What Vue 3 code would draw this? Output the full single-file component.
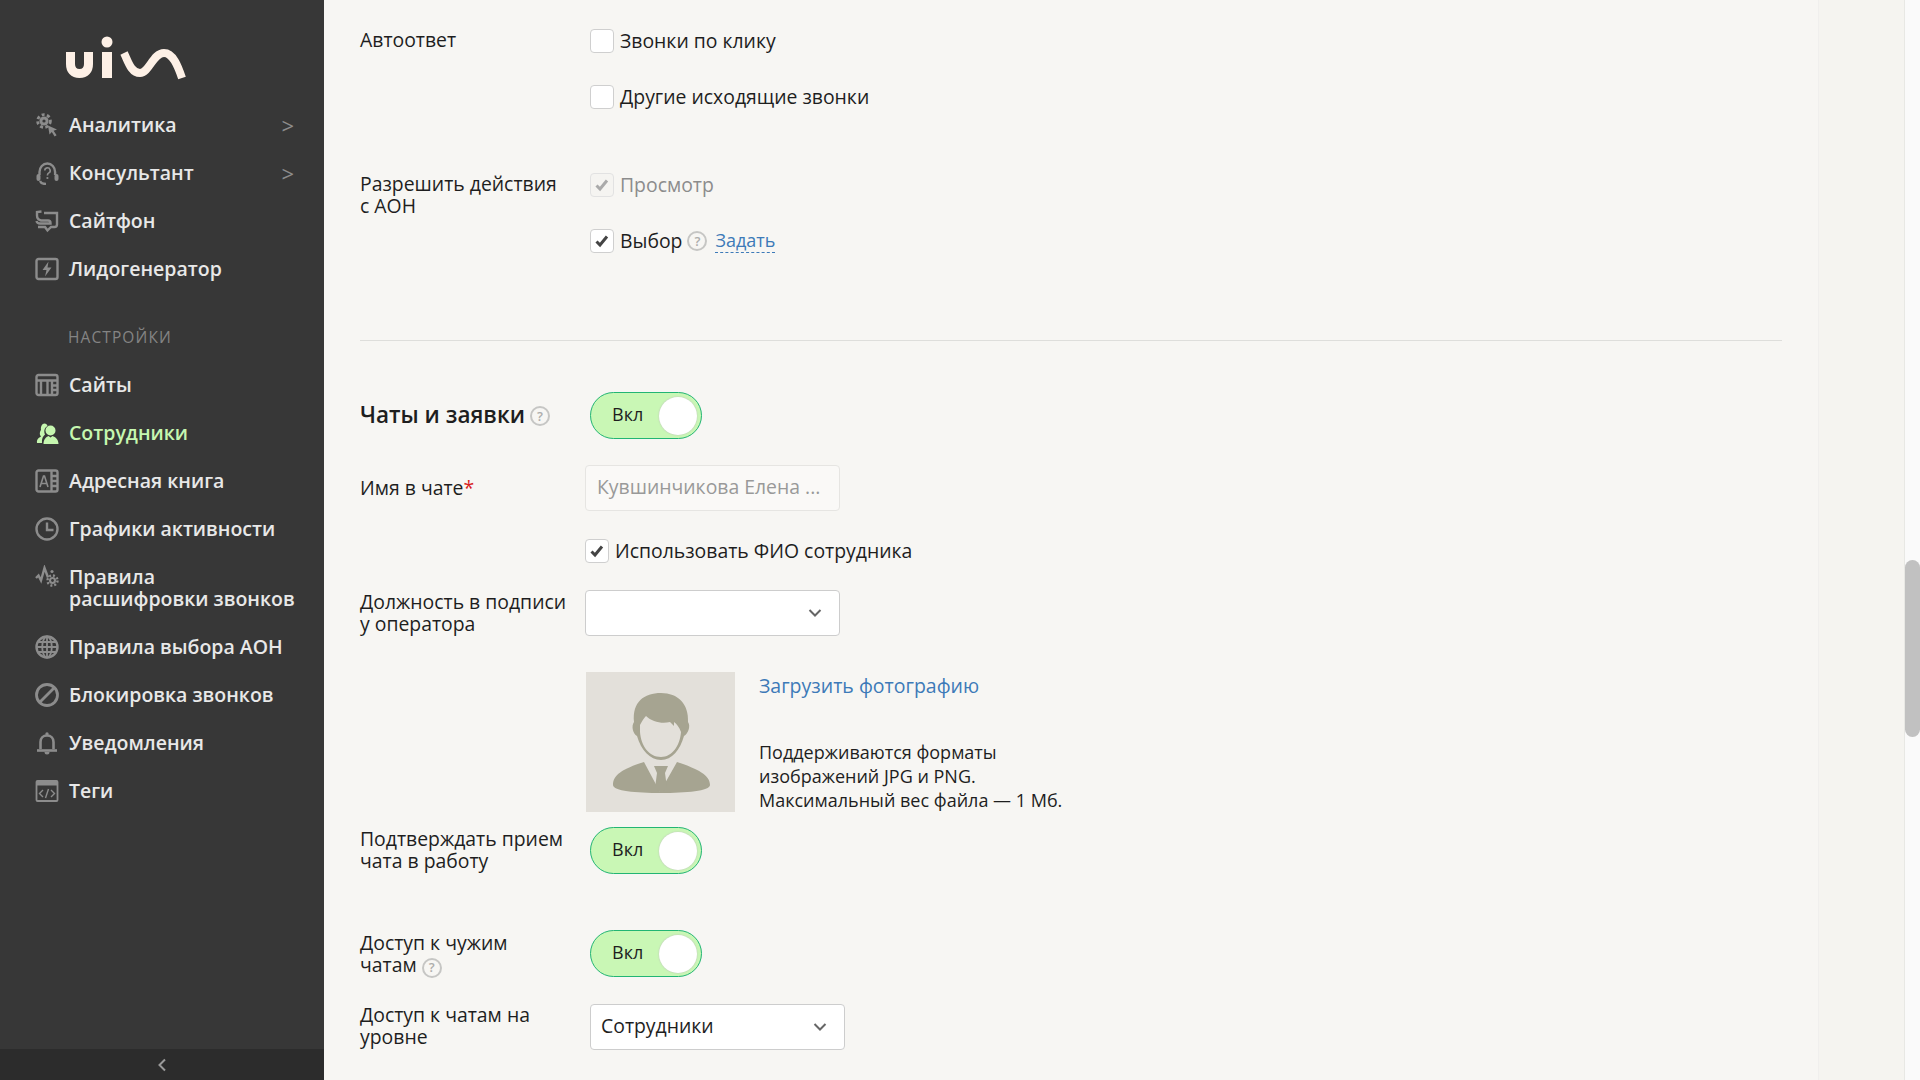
<template>
  <div class="app">
    <aside class="sidebar">
      <svg class="logo" width="120" height="46" viewBox="0 0 120 46">
        <path d="M4.500 16v12c0 6 3 9.500 9 9.500s9-3.500 9-9.500V16" fill="none" stroke="#fdf0e6" stroke-width="9" />
        <path d="M41 16v26" fill="none" stroke="#fdf0e6" stroke-width="10" />
        <circle cx="41" cy="6" r="5.500" fill="#fdf0e6" />
        <path d="M58 17c4 8 7 20 16 20 9 0 13-20 24-20 9 0 14 13 18 25" fill="none" stroke="#fdf0e6" stroke-width="8" />
      </svg>
      <nav class="nav">
        <a v-for="item in mainItems" :key="item.title" class="nav-item">
          <svg class="nav-icon" viewBox="0 0 24 24" v-html="icons[item.icon]"></svg>
          <span>{{ item.title }}</span>
          <span v-if="item.more" class="more">&gt;</span>
        </a>
      </nav>
      <div class="nav-title">НАСТРОЙКИ</div>
      <nav class="nav">
        <a
          v-for="item in settingsItems"
          :key="item.title"
          class="nav-item"
          :class="{ active: item.active }"
        >
          <svg class="nav-icon" viewBox="0 0 24 24" v-html="icons[item.icon]"></svg>
          <span>{{ item.title }}<template v-if="item.second"><br />{{ item.second }}</template></span>
        </a>
      </nav>
      <div class="collapse">
        <svg width="10" height="14" viewBox="0 0 10 14">
          <path d="M8 1.500 2.500 7 8 12.500" fill="none" stroke="#9a9a9a" stroke-width="2" />
        </svg>
      </div>
    </aside>

    <main class="main">
      <div class="content">
        <div class="row first">
          <div class="label top">Автоответ</div>
          <div class="checks">
            <label class="check"><span class="box"></span>Звонки по клику</label>
            <label class="check"><span class="box"></span>Другие исходящие звонки</label>
          </div>
        </div>

        <div class="row aon">
          <div class="label top">Разрешить действия<br />с АОН</div>
          <div class="checks">
            <label class="check disabled">
              <span class="box">
                <svg width="16" height="14" viewBox="0 0 16 14"><path d="M2.500 7.500 6 11l7-8.500" fill="none" stroke="#aaa" stroke-width="3" /></svg>
              </span>
              Просмотр
            </label>
            <label class="check">
              <span class="box">
                <svg width="16" height="14" viewBox="0 0 16 14"><path d="M2.500 7.500 6 11l7-8.500" fill="none" stroke="#444" stroke-width="3" /></svg>
              </span>
              Выбор
              <span class="help">?</span>
              <a class="set-link">Задать</a>
            </label>
          </div>
        </div>

        <div class="divider"></div>

        <div class="row heading-row">
          <h2 class="heading">Чаты и заявки<span class="help">?</span></h2>
          <div class="toggle"><span>Вкл</span><i class="knob"></i></div>
        </div>

        <div class="row name-row narrow">
          <div class="label">Имя в чате<span class="req">*</span></div>
          <input class="name-input" placeholder="Кувшинчикова Елена ..." />
        </div>

        <div class="row fio-row narrow">
          <div class="label"></div>
          <label class="check fio">
            <span class="box">
              <svg width="16" height="14" viewBox="0 0 16 14"><path d="M2.500 7.500 6 11l7-8.500" fill="none" stroke="#444" stroke-width="3" /></svg>
            </span>
            Использовать ФИО сотрудника
          </label>
        </div>

        <div class="row post-row narrow">
          <div class="label">Должность в подписи<br />у оператора</div>
          <div class="select">
            <span></span>
            <svg width="14" height="10" viewBox="0 0 14 10"><path d="M1.500 2 7 7.500 12.500 2" fill="none" stroke="#666" stroke-width="2" /></svg>
          </div>
        </div>

        <div class="row photo-row narrow">
          <div class="label"></div>
          <div class="photo">
            <svg width="149" height="140" viewBox="0 0 149 140">
              <path d="M27 113c0-10 9-16 31-23l16 30 17-30c21 7 33 13 33 23 0 6-24 8-49 8s-48-2-48-8z" fill="#a6a491" />
              <path d="M68 94h14l-3 7 2 15-6 5-6-5 2-15z" fill="#a6a491" />
              <path d="M48 50c-2-20 10-29 27-29s28 11 27 29c3 4 0 12-4 14-4 14-12 24-23 24s-20-10-24-24c-4-2-6-10-3-14z" fill="#a6a491" />
              <path d="M54 53c2-4 4-7 6-9 6 6 16 8 24 6l4 4v-4c3 2 5 5 7 10-1 14-9 25-20 25-12 0-20-11-21-25z" fill="#e3e0da" />
            </svg>
          </div>
          <div class="photo-info">
            <a class="upload">Загрузить фотографию</a>
            <p class="hint">Поддерживаются форматы<br />изображений JPG и PNG.<br />Максимальный вес файла — 1 Мб.</p>
          </div>
        </div>

        <div class="row confirm-row">
          <div class="label">Подтверждать прием<br />чата в работу</div>
          <div class="toggle"><span>Вкл</span><i class="knob"></i></div>
        </div>

        <div class="row foreign-row">
          <div class="label">Доступ к чужим<br />чатам<span class="help small">?</span></div>
          <div class="toggle"><span>Вкл</span><i class="knob"></i></div>
        </div>

        <div class="row level-row">
          <div class="label">Доступ к чатам на<br />уровне</div>
          <div class="select">
            <span>Сотрудники</span>
            <svg width="14" height="10" viewBox="0 0 14 10"><path d="M1.500 2 7 7.500 12.500 2" fill="none" stroke="#666" stroke-width="2" /></svg>
          </div>
        </div>
      </div>
      <div class="band"></div>
      <div class="scrollbar"><div class="thumb"></div></div>
    </main>
  </div>
</template>

<script setup>
const mainItems = [
  { title: 'Аналитика', icon: 'analytics', more: true },
  { title: 'Консультант', icon: 'consultant', more: true },
  { title: 'Сайтфон', icon: 'sitephone' },
  { title: 'Лидогенератор', icon: 'leads' },
]

const settingsItems = [
  { title: 'Сайты', icon: 'sites' },
  { title: 'Сотрудники', icon: 'staff', active: true },
  { title: 'Адресная книга', icon: 'book' },
  { title: 'Графики активности', icon: 'clock' },
  { title: 'Правила', second: 'расшифровки звонков', icon: 'rules' },
  { title: 'Правила выбора АОН', icon: 'globe' },
  { title: 'Блокировка звонков', icon: 'block' },
  { title: 'Уведомления', icon: 'bell' },
  { title: 'Теги', icon: 'tags' },
]

const gray = 'fill="none" stroke="#8c8c8c" stroke-width="2.400"'

const icons = {
  analytics: `<circle cx="9" cy="8" r="4.600" fill="#8c8c8c"/><circle cx="9" cy="8" r="6.400" fill="none" stroke="#8c8c8c" stroke-width="2.800" stroke-dasharray="3 2.400"/><circle cx="9" cy="8" r="1.600" fill="#373737"/><path d="M13 12.500l9 4-3.400 1.300 3 4.500-2 1.200-2.800-4.500-2.300 2.600z" fill="#8c8c8c"/>`,
  consultant: `<path d="M4.500 14V11a7.800 8.500 0 0 1 15.600 0v3" ${gray}/><rect x="1.500" y="13" width="4" height="7" rx="2" fill="#8c8c8c"/><rect x="19.500" y="13" width="4" height="7" rx="2" fill="#8c8c8c"/><path d="M5 20c1 2.500 3 3 6 3" ${gray}/><path d="M9.800 9.500a2.700 2.700 0 1 1 4 2.400c-1.200.7-1.400 1.200-1.400 2.500" fill="none" stroke="#8c8c8c" stroke-width="1.600"/><circle cx="12.400" cy="17" r="1.100" fill="#8c8c8c"/>`,
  sitephone: `<path d="M6.500 2.500 2 3v3.500c0 3 2 4.500 4 5h7c2 0 2.500 1 2.500 2.500v.5H5C3 14.500 2 14 1.500 12" ${gray}/><path d="M9 4h13v11.500c0 1.500-1 2.500-2.500 2.500H16L12.500 21.500 10 18H3" ${gray}/>`,
  leads: `<rect x="1.500" y="2" width="21" height="20" rx="2" ${gray}/><path d="M13.500 4.500 7.500 13h4l-1.500 6.500 6.500-9h-4z" fill="#8c8c8c"/>`,
  sites: `<rect x="1.500" y="2" width="21" height="20" rx="2" ${gray}/><path d="M2 7.500h20M6 8v13M12.500 8v13M17 8v13M17 12.500h5M17 17h5" ${gray}/>`,
  staff: `<path d="M2 22c-.5-4 2-5.500 4-6.500-2-2.500-1-5 0-6.500C5.500 5.500 7 2.500 9.500 2.500c1.600 0 2.700 1 3 2.500-3 1.500-4 5-2.500 8.500C8 15 6.500 18 7 22z" fill="#c6f7b0"/><circle cx="15.500" cy="9.500" r="5" fill="#c6f7b0"/><path d="M8.500 23c0-4.500 2.500-7 5-8l2 1.500 2-1.500c3 1 6 3.500 6 8z" fill="#c6f7b0"/>`,
  book: `<rect x="1.500" y="1.500" width="21" height="21" rx="2" ${gray}/><path d="M16.500 2v20" ${gray}/><path d="M5 18l3.500-11h1L13 18M6.200 14.500h5.600" fill="none" stroke="#8c8c8c" stroke-width="1.600"/><path d="M17 7h5M17 12h5M17 17h5" ${gray}/>`,
  clock: `<circle cx="12" cy="12" r="10.500" fill="none" stroke="#8c8c8c" stroke-width="2.400"/><path d="M12 5.500V13h6.500" ${gray}/>`,
  rules: `<path d="M1 13l2.500-2.500L6 15.500 9.500 3l3.500 9.500" fill="none" stroke="#8c8c8c" stroke-width="2.400"/><circle cx="17.500" cy="15.500" r="3.500" fill="#8c8c8c"/><circle cx="17.500" cy="15.500" r="5" fill="none" stroke="#8c8c8c" stroke-width="2.400" stroke-dasharray="2 1.900"/><circle cx="17.500" cy="15.500" r="1.400" fill="#373737"/><circle cx="17" cy="6.500" r="1.600" fill="#8c8c8c"/>`,
  globe: `<circle cx="12" cy="12" r="10.500" fill="none" stroke="#8c8c8c" stroke-width="2.400"/><ellipse cx="12" cy="12" rx="4.800" ry="10.500" fill="none" stroke="#8c8c8c" stroke-width="1.800"/><path d="M12 1.500v21M1.500 12h21M3 7h18M3 17h18" fill="none" stroke="#8c8c8c" stroke-width="1.800"/>`,
  block: `<circle cx="12" cy="12" r="10.500" fill="none" stroke="#8c8c8c" stroke-width="2.800"/><path d="M5 19 19 5" fill="none" stroke="#8c8c8c" stroke-width="2.800"/>`,
  bell: `<path d="M5.500 18V11c0-3.500 2.500-6.500 6.500-6.500s6.500 3 6.500 6.500v7" fill="none" stroke="#8c8c8c" stroke-width="2.600"/><path d="M2 19.500h20" fill="none" stroke="#8c8c8c" stroke-width="2.600"/><circle cx="12" cy="3" r="1.700" fill="#8c8c8c"/><path d="M9.500 21h5a2.500 2.500 0 0 1-5 0z" fill="#8c8c8c"/>`,
  tags: `<rect x="1.500" y="2" width="21" height="20" rx="1" fill="none" stroke="#8c8c8c" stroke-width="1.800"/><path d="M2 3h20v3.500H2z" fill="#8c8c8c"/><path d="M8 11l-3.500 3.500L8 18M16 11l3.500 3.500L16 18M13.500 10l-3 9" fill="none" stroke="#8c8c8c" stroke-width="1.400"/>`,
}
</script>

<style>
html,
body {
  margin: 0;
  overflow: hidden;
}
</style>

<style scoped>
.app {
  display: flex;
  width: 1920px;
  height: 1080px;
  overflow: hidden;
  font-family: 'Open Sans', 'Noto Sans', sans-serif;
  color: #1e1e1e;
}

.sidebar {
  width: 324px;
  flex: none;
  display: flex;
  flex-direction: column;
  background: #373737;
}

.logo {
  display: block;
  margin: 36px 0 0 66px;
  flex: none;
}

.nav {
  display: flex;
  flex-direction: column;
  gap: 26px;
  padding-left: 35px;
}

.logo + .nav {
  margin-top: 32px;
}

.nav-item {
  display: flex;
  align-items: flex-start;
  gap: 10px;
  font-size: 19.500px;
  font-weight: 600;
  line-height: 22px;
  color: #e8e8e8;
}

.nav-item.active {
  color: #c6f7b0;
}

.nav-icon {
  width: 24px;
  height: 24px;
  margin: -1px 0;
  flex: none;
}

.more {
  margin-left: auto;
  margin-right: 30px;
  font-weight: 400;
  font-size: 22px;
  color: #8c8c8c;
}

.nav-title {
  margin: 47px 0 27px 68px;
  font-size: 15.500px;
  line-height: 20px;
  letter-spacing: 1.100px;
  color: #848484;
}

.collapse {
  margin-top: auto;
  height: 31px;
  display: flex;
  align-items: center;
  justify-content: center;
  background: #2c2c2c;
}

.main {
  flex: 1;
  display: flex;
  background: #f7f6f3;
}

.content {
  width: 1494px;
  flex: none;
  box-sizing: border-box;
  padding: 29px 36px 0;
}

.band {
  width: 87px;
  flex: none;
  box-sizing: border-box;
  background: #f5f4f0;
  border-left: 1px solid #f0efed;
  border-right: 1px solid #e8e8e4;
}

.scrollbar {
  width: 15px;
  flex: none;
  background: #fafafa;
  padding-top: 560px;
}

.thumb {
  height: 177px;
  border-radius: 8px;
  background: #c1c1c1;
}

.row {
  display: flex;
  align-items: center;
}

.label {
  width: 230px;
  flex: none;
  font-size: 19.400px;
  line-height: 22px;
  white-space: nowrap;
  color: #1e1e1e;
}

.narrow .label {
  width: 225px;
}

.label.top {
  align-self: flex-start;
}

.first {
  align-items: flex-start;
}

.aon {
  align-items: flex-start;
  margin-top: 64px;
}

.checks {
  display: flex;
  flex-direction: column;
  gap: 32px;
}

.check {
  display: flex;
  align-items: flex-start;
  height: 24px;
  font-size: 19.400px;
  line-height: 23px;
  color: #1e1e1e;
}

.box {
  width: 24px;
  height: 24px;
  box-sizing: border-box;
  margin-right: 6px;
  display: flex;
  align-items: center;
  justify-content: center;
  background: #fff;
  border: 1px solid #cfcfcf;
  border-radius: 4px;
}

.check.disabled {
  color: #8c8c8c;
}

.check.disabled .box {
  background: #f5f4f1;
  border-color: #e2e2e2;
}

.help {
  display: inline-flex;
  align-items: center;
  justify-content: center;
  align-self: center;
  width: 20px;
  height: 20px;
  box-sizing: border-box;
  margin-left: 5px;
  border: 2px solid #c6c6c4;
  border-radius: 50%;
  font-size: 13px;
  font-weight: 600;
  line-height: 1;
  color: #adadab;
  vertical-align: 0;
}

.set-link {
  margin-left: 8px;
  color: #3d7ab8;
  border-bottom: 1px dashed #3d7ab8;
  line-height: 23px;
  font-size: 18px;
}

.divider {
  height: 1px;
  margin-top: 87px;
  background: #dededb;
}

.heading-row {
  margin-top: 51px;
}

.heading {
  display: flex;
  align-items: center;
  width: 230px;
  height: 30px;
  flex: none;
  margin: -2px 0 0;
  font-size: 22.500px;
  font-weight: 600;
  line-height: 30px;
  color: #1e1e1e;
  white-space: nowrap;
}

.heading .help {
  margin-top: 3px;
}

.toggle {
  width: 112px;
  height: 47px;
  box-sizing: border-box;
  display: flex;
  align-items: center;
  justify-content: space-between;
  padding: 0 4px 0 21px;
  border: 1.500px solid #22b573;
  border-radius: 24px;
  background: #c9f7b5;
  font-size: 18px;
  color: #1e1e1e;
}

.toggle span {
  margin-top: -3px;
}

.knob {
  width: 38px;
  height: 38px;
  border-radius: 50%;
  background: #fff;
  box-shadow: 0 0 2px #bdbdbd;
}

.name-row {
  margin-top: 26px;
}

.req {
  color: #d81e1e;
}

.name-input {
  width: 255px;
  height: 46px;
  box-sizing: border-box;
  padding: 0 11px 4px;
  background: #faf9f7;
  border: 1px solid #e6e5e2;
  border-radius: 4px;
  outline: none;
  font-family: inherit;
  font-size: 19.400px;
  text-overflow: ellipsis;
}

.name-input::placeholder {
  color: #999;
  opacity: 1;
}

.fio-row {
  margin-top: 28px;
}

.post-row {
  margin-top: 27px;
}

.select {
  width: 255px;
  height: 46px;
  box-sizing: border-box;
  display: flex;
  align-items: center;
  justify-content: space-between;
  padding: 0 17px 0 10px;
  background: #fff;
  border: 1px solid #cdcdcd;
  border-radius: 4px;
  font-size: 19.400px;
  color: #1e1e1e;
}

.select span {
  margin-top: -3px;
}

.photo-row {
  align-items: flex-start;
  margin-top: 36px;
}

.photo {
  width: 149px;
  height: 140px;
  margin-left: 1px;
  flex: none;
  background: #e3e0da;
}

.photo svg {
  display: block;
}

.photo-info {
  margin-left: 24px;
}

.upload {
  display: block;
  font-size: 19.500px;
  line-height: 28px;
  color: #3d7ab8;
}

.hint {
  margin: 40px 0 0;
  font-size: 18px;
  line-height: 24px;
  color: #1e1e1e;
}

.confirm-row {
  margin-top: 15px;
}

.confirm-row .label {
  margin-bottom: 2px;
}

.foreign-row {
  margin-top: 56px;
}

.foreign-row .label {
  margin-top: 2px;
}

.level-row {
  margin-top: 26px;
}

.level-row .label {
  margin-bottom: 2px;
}
</style>
